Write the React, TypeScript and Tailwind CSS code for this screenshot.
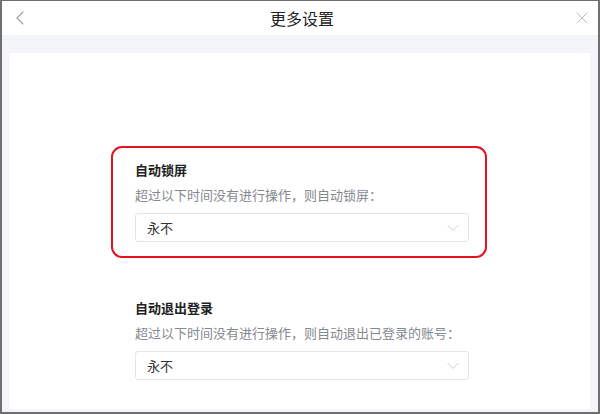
import { ChevronLeft, X, ChevronDown } from 'lucide-react';

const font = { fontFamily: '"Noto Sans CJK SC", "Noto Sans", sans-serif' };

function Select({ value }: { value: string }) {
  return (
    <div className="h-[29px] w-[334px] border border-[#e3e5ea] rounded-[3px] bg-white flex items-center justify-between pl-[11px] pr-[5px]">
      <span className="text-[13px] leading-[18px] text-[#333333]">{value}</span>
      <ChevronDown size={20} strokeWidth={0.9} className="text-[#b8bcc4]" />
    </div>
  );
}

function Section({ title, desc, highlight }: { title: string; desc: string; highlight?: boolean }) {
  return (
    <div className="relative">
      {highlight && (
        <div className="absolute -left-[24px] -top-[15px] -right-[18px] -bottom-[16px] border-2 border-[#e3141f] rounded-[11px] pointer-events-none" />
      )}
      <div className="text-[13px] leading-[18px] font-bold text-[#222222]">{title}</div>
      <div className="mt-[7px] text-[13px] leading-[18px] text-[#85888e]">{desc}</div>
      <div className="mt-[9px]">
        <Select value="永不" />
      </div>
    </div>
  );
}

export default function App() {
  return (
    <div
      className="w-[600px] h-[414px] flex flex-col border-t border-l-2 border-r-2 border-b-2 border-[#6f6f6f] bg-white overflow-hidden"
      style={font}
    >
      {/* Header */}
      <div className="h-[34px] flex items-center justify-between pl-[6px] pr-[6px] bg-white shrink-0">
        <ChevronLeft size={24} strokeWidth={1.1} className="text-[#9a9ea6]" />
        <span className="text-[16px] leading-[20px] text-[#222222]">更多设置</span>
        <X size={20} strokeWidth={1.1} className="text-[#b4b8bf]" />
      </div>

      {/* Body */}
      <div className="flex-1 bg-[#f4f5f9] pt-[18px] px-[8px] pb-[3px] flex flex-col">
        <div className="flex-1 bg-white pl-[125px] pt-[108px]">
          <div className="w-[334px]">
            <Section title="自动锁屏" desc="超过以下时间没有进行操作，则自动锁屏：" highlight />
            <div className="mt-[57px]">
              <Section title="自动退出登录" desc="超过以下时间没有进行操作，则自动退出已登录的账号：" />
            </div>
          </div>
        </div>
      </div>
    </div>
  );
}
